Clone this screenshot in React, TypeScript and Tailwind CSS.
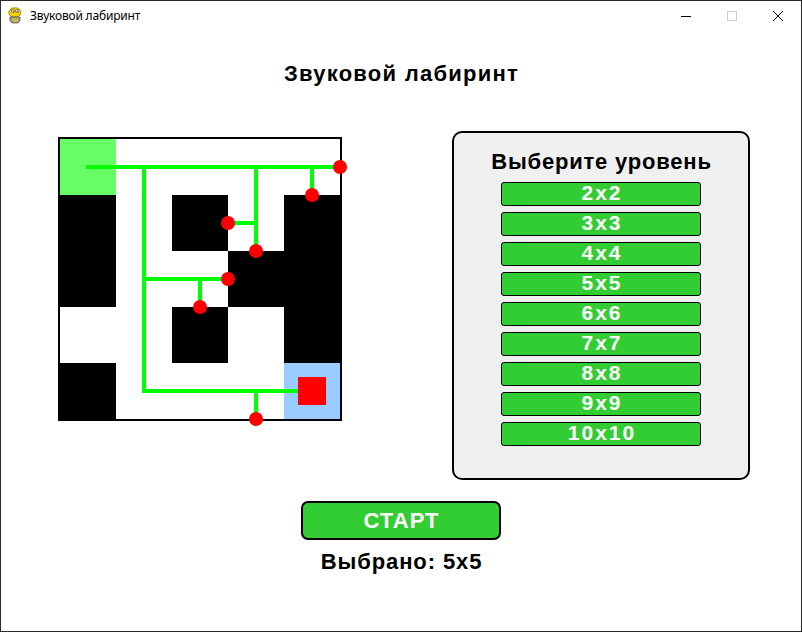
import React from "react";

const font = { fontFamily: '"Liberation Sans", Arial, sans-serif' };

// 5x5 maze: g = start, w = open, b = wall, e = exit
const grid = [
  "gwwww",
  "bwbwb",
  "bwwbb",
  "wwbwb",
  "bwwwe",
];

const cellColor: Record<string, string> = {
  g: "bg-[#66ff66]",
  w: "bg-white",
  b: "bg-black",
  e: "bg-[#99ccff]",
};

// path lines in inner maze coordinates (cell = 56px)
const lines = [
  [28, 28, 280, 28],
  [84, 28, 84, 252],
  [84, 252, 252, 252],
  [196, 28, 196, 112],
  [196, 84, 168, 84],
  [252, 28, 252, 56],
  [84, 140, 168, 140],
  [140, 140, 140, 168],
  [196, 252, 196, 280],
];

const dots = [
  [280, 28],
  [252, 56],
  [168, 84],
  [196, 112],
  [168, 140],
  [140, 168],
  [196, 280],
];

const levels = ["2x2", "3x3", "4x4", "5x5", "6x6", "7x7", "8x8", "9x9", "10x10"];

function PygameIcon() {
  return (
    <svg width="16" height="18" viewBox="0 0 16 18">
      <path d="M3 3 Q4 0 7 1 Q10 0 12 2 Q15 4 13 8 Q12 10 9 10 L7 10 Q3 10 2 7 Q1 5 3 3Z" fill="#f5d000" stroke="#8a7a00" strokeWidth="0.8" />
      <circle cx="6" cy="4" r="1.6" fill="#fff" stroke="#333" strokeWidth="0.5" />
      <circle cx="10" cy="4" r="1.6" fill="#fff" stroke="#333" strokeWidth="0.5" />
      <circle cx="6.2" cy="4.2" r="0.6" fill="#000" />
      <circle cx="10.2" cy="4.2" r="0.6" fill="#000" />
      <path d="M3 10 Q2 14 5 16 L11 16 Q14 14 13 10Z" fill="#9a9a9a" stroke="#555" strokeWidth="0.8" />
      <path d="M5 12 L11 12 M5 14 L11 14" stroke="#f5d000" strokeWidth="1" />
    </svg>
  );
}

function TitleBar() {
  return (
    <div className="flex h-[30px] items-center bg-white">
      <div className="ml-[6px] flex w-[16px] items-center">
        <PygameIcon />
      </div>
      <span className="ml-[7px] text-[12px] tracking-[-0.2px] text-black" style={{ fontFamily: '"Noto Sans", "Liberation Sans", sans-serif' }}>
        Звуковой лабиринт
      </span>
      <div className="ml-auto flex h-full">
        <div className="flex w-[46px] items-center justify-center">
          <div className="h-px w-[10px] bg-black" />
        </div>
        <div className="flex w-[46px] items-center justify-center">
          <div className="h-[10px] w-[10px] border border-[#cccccc]" />
        </div>
        <div className="flex w-[46px] items-center justify-center">
          <svg width="10" height="10" viewBox="0 0 10 10">
            <path d="M0 0 L10 10 M10 0 L0 10" stroke="#000" strokeWidth="1" />
          </svg>
        </div>
      </div>
    </div>
  );
}

function Maze() {
  return (
    <div className="relative mt-[6px] h-[284px] w-[284px] border-2 border-black">
      <div className="grid grid-cols-5">
        {grid.flatMap((row, r) =>
          row.split("").map((c, i) => (
            <div key={`${r}-${i}`} className={`h-[56px] w-[56px] ${cellColor[c]}`} />
          ))
        )}
      </div>
      <svg className="absolute left-0 top-0 overflow-visible" width="280" height="280" viewBox="0 0 280 280">
        {lines.map(([x1, y1, x2, y2], i) => (
          <line key={i} x1={x1} y1={y1} x2={x2} y2={y2} stroke="#00ff00" strokeWidth="4" strokeLinecap="square" />
        ))}
        <rect x="238" y="238" width="28" height="28" fill="#ff0000" />
        {dots.map(([cx, cy], i) => (
          <circle key={i} cx={cx} cy={cy} r="7" fill="#ff0000" />
        ))}
      </svg>
    </div>
  );
}

function LevelPanel() {
  return (
    <div className="flex h-[349px] w-[298px] flex-col items-center rounded-[10px] border-2 border-black bg-[#f0f0f0] pt-[16px]">
      <div className="pl-[1px] text-[22px] font-bold leading-[26px] tracking-[0.8px] text-black">Выберите уровень</div>
      <div className="mt-[7px] flex flex-col gap-[6px]">
        {levels.map((l) => (
          <div
            key={l}
            className="flex h-[24px] w-[200px] items-center justify-center rounded-[3px] border border-black bg-[#32cd32] pb-[2px] pl-[2px] text-[21px] font-bold leading-[22px] tracking-[2px] text-white"
          >
            {l}
          </div>
        ))}
      </div>
    </div>
  );
}

export default function App() {
  return (
    <div className="h-[632px] w-[802px] overflow-hidden border border-[#2b2b2b] bg-white" style={font}>
      <TitleBar />
      <div className="flex flex-col">
        <h1 className="mt-[30px] pl-[1px] text-center text-[22px] font-bold leading-[26px] tracking-[1.25px] text-black">
          Звуковой лабиринт
        </h1>
        <div className="mt-[44px] flex items-start pl-[57px]">
          <Maze />
          <div className="ml-[110px]">
            <LevelPanel />
          </div>
        </div>
        <div className="mx-auto mt-[21px] flex h-[39px] w-[200px] items-center justify-center rounded-[7px] border-2 border-black bg-[#32cd32] pl-[1px] text-[22px] font-bold leading-[26px] tracking-[1px] text-white">
          СТАРТ
        </div>
        <div className="mt-[9px] pl-[1px] text-center text-[22px] font-bold leading-[26px] tracking-[0.9px] text-black">
          Выбрано: 5x5
        </div>
      </div>
    </div>
  );
}
